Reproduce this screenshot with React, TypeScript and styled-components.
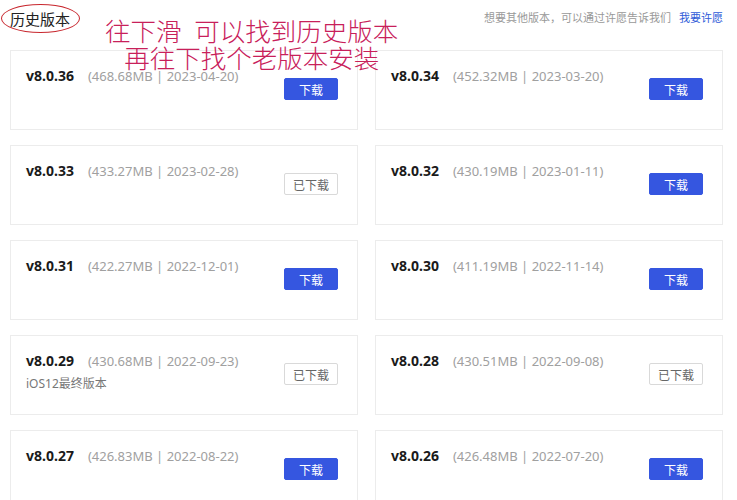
import styled, { createGlobalStyle } from "styled-components";

const GlobalStyle = createGlobalStyle`
  html, body {
    margin: 0;
    padding: 0;
    background: #ffffff;
  }
  body {
    font-family: "Noto Sans", "Noto Sans CJK SC", sans-serif;
    overflow: hidden;
  }
`;

type Version = {
  version: string;
  size: string;
  date: string;
  note?: string;
  downloaded?: boolean;
};

const versions: Version[] = [
  { version: "v8.0.36", size: "468.68MB", date: "2023-04-20" },
  { version: "v8.0.34", size: "452.32MB", date: "2023-03-20" },
  { version: "v8.0.33", size: "433.27MB", date: "2023-02-28", downloaded: true },
  { version: "v8.0.32", size: "430.19MB", date: "2023-01-11" },
  { version: "v8.0.31", size: "422.27MB", date: "2022-12-01" },
  { version: "v8.0.30", size: "411.19MB", date: "2022-11-14" },
  { version: "v8.0.29", size: "430.68MB", date: "2022-09-23", note: "iOS12最终版本", downloaded: true },
  { version: "v8.0.28", size: "430.51MB", date: "2022-09-08", downloaded: true },
  { version: "v8.0.27", size: "426.83MB", date: "2022-08-22" },
  { version: "v8.0.26", size: "426.48MB", date: "2022-07-20" },
];

function VersionCard({ item }: { item: Version }) {
  return (
    <Card>
      <Info>
        <TitleRow>
          <Name>{item.version}</Name>
          <Meta>
            ({item.size} | {item.date})
          </Meta>
        </TitleRow>
        {item.note && <Note>{item.note}</Note>}
      </Info>
      <Button $done={item.downloaded}>{item.downloaded ? "已下载" : "下载"}</Button>
    </Card>
  );
}

export default function App() {
  return (
    <>
      <GlobalStyle />
      <Page>
        <Header>
          <Heading>
            历史版本
            <Circle />
          </Heading>
          <Wish>
            想要其他版本，可以通过许愿告诉我们<WishLink>我要许愿</WishLink>
          </Wish>
          <Annotation>
            <span>往下滑{"\u2002"}可以找到历史版本</span>
            <span>再往下找个老版本安装</span>
          </Annotation>
        </Header>
        <Grid>
          {versions.map((v) => (
            <VersionCard key={v.version} item={v} />
          ))}
        </Grid>
      </Page>
    </>
  );
}

const Page = styled.div`
  width: 737px;
  height: 500px;
  padding: 0 14px 0 10px;
  box-sizing: border-box;
  overflow: hidden;
`;

const Header = styled.div`
  position: relative;
  height: 50px;
  display: flex;
  justify-content: space-between;
  align-items: flex-start;
`;

const Heading = styled.h2`
  position: relative;
  margin: 8px 0 0;
  font-size: 15px;
  font-weight: 400;
  line-height: 22px;
  color: #222222;
  font-family: "Noto Sans CJK SC", sans-serif;
`;

const Circle = styled.span`
  position: absolute;
  left: -9px;
  top: -4px;
  width: 77px;
  height: 27px;
  border: 1.5px solid #c8282f;
  border-radius: 50%;
`;

const Wish = styled.div`
  margin-top: 9px;
  font-size: 11px;
  line-height: 16px;
  color: #999999;
  font-family: "Noto Sans CJK SC", sans-serif;
`;

const WishLink = styled.a`
  margin-left: 8px;
  color: #2f5bd8;
  cursor: pointer;
`;

const Annotation = styled.div`
  position: absolute;
  left: 95px;
  top: 16px;
  display: flex;
  flex-direction: column;
  align-items: center;
  font-family: "Noto Sans CJK SC", sans-serif;
  font-size: 25.5px;
  font-weight: 300;
  line-height: 27px;
  color: #c8205a;
  white-space: pre;
  z-index: 2;
`;

const Grid = styled.div`
  display: grid;
  grid-template-columns: 348px 348px;
  column-gap: 17px;
  row-gap: 15px;
`;

const Card = styled.div`
  height: 80px;
  box-sizing: border-box;
  border: 1px solid #ececec;
  padding: 15px 19px 0 15px;
  display: flex;
  justify-content: space-between;
  align-items: flex-start;
  background: #ffffff;
`;

const Info = styled.div`
  display: flex;
  flex-direction: column;
  gap: 4px;
`;

const TitleRow = styled.div`
  display: flex;
  align-items: baseline;
  gap: 14px;
`;

const Name = styled.span`
  font-size: 14px;
  font-weight: 700;
  line-height: 20px;
  color: #1a1a1a;
`;

const Meta = styled.span`
  font-size: 13px;
  line-height: 20px;
  color: #a0a0a0;
`;

const Note = styled.span`
  font-size: 12px;
  line-height: 18px;
  color: #777777;
  font-family: "Noto Sans", "Noto Sans CJK SC", sans-serif;
`;

const Button = styled.button<{ $done?: boolean }>`
  margin-top: 12px;
  width: 54px;
  height: 22px;
  padding: 0;
  border-radius: 2px;
  font-size: 12px;
  font-family: "Noto Sans CJK SC", sans-serif;
  cursor: pointer;
  border: 1px solid ${(p) => (p.$done ? "#d9d9d9" : "#3556e0")};
  background: ${(p) => (p.$done ? "#ffffff" : "#3556e0")};
  color: ${(p) => (p.$done ? "#666666" : "#ffffff")};
`;
